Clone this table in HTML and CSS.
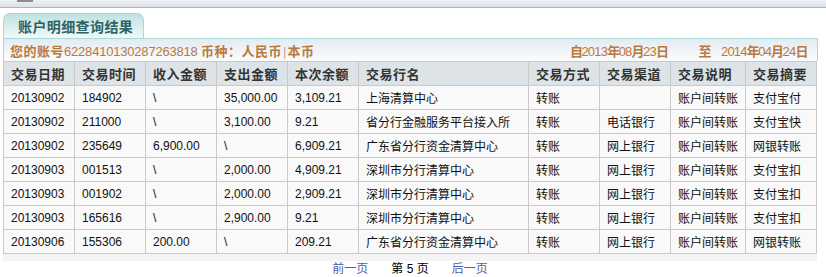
FILE: index.html
```html
<!DOCTYPE html>
<html lang="zh-CN">
<head>
<meta charset="utf-8">
<title>账户明细查询结果</title>
<link rel="stylesheet" href="styles.css">
</head>
<body>
<div class="topbar"><span class="topbar-btn"></span></div>
<div class="panel">
  <div class="tabs"><div class="tab">账户明细查询结果</div></div>
  <div class="infobar">
    <div class="info-left">您的账号<span class="num">6228410130287263818</span> 币种：人民币<span class="sep">|</span>本币</div>
    <div class="info-right">自<span class="d">2013</span>年<span class="d">08</span>月<span class="d">23</span>日<span class="to">至</span><span class="d">2014</span>年<span class="d">04</span>月<span class="d">24</span>日</div>
  </div>
  <table class="grid">
    <colgroup>
      <col class="c71"><col class="c71"><col class="c71"><col class="c71"><col class="c71">
      <col class="c170"><col class="c71"><col class="c71"><col class="c75"><col class="c71">
    </colgroup>
    <thead>
      <tr><th>交易日期</th><th>交易时间</th><th>收入金额</th><th>支出金额</th><th>本次余额</th><th>交易行名</th><th>交易方式</th><th>交易渠道</th><th>交易说明</th><th>交易摘要</th></tr>
    </thead>
    <tbody>
      <tr><td>20130902</td><td>184902</td><td>\</td><td>35,000.00</td><td>3,109.21</td><td>上海清算中心</td><td>转账</td><td></td><td>账户间转账</td><td>支付宝付</td></tr>
      <tr><td>20130902</td><td>211000</td><td>\</td><td>3,100.00</td><td>9.21</td><td>省分行金融服务平台接入所</td><td>转账</td><td>电话银行</td><td>账户间转账</td><td>支付宝快</td></tr>
      <tr><td>20130902</td><td>235649</td><td>6,900.00</td><td>\</td><td>6,909.21</td><td>广东省分行资金清算中心</td><td>转账</td><td>网上银行</td><td>账户间转账</td><td>网银转账</td></tr>
      <tr><td>20130903</td><td>001513</td><td>\</td><td>2,000.00</td><td>4,909.21</td><td>深圳市分行清算中心</td><td>转账</td><td>网上银行</td><td>账户间转账</td><td>支付宝扣</td></tr>
      <tr><td>20130903</td><td>001902</td><td>\</td><td>2,000.00</td><td>2,909.21</td><td>深圳市分行清算中心</td><td>转账</td><td>网上银行</td><td>账户间转账</td><td>支付宝扣</td></tr>
      <tr><td>20130903</td><td>165616</td><td>\</td><td>2,900.00</td><td>9.21</td><td>深圳市分行清算中心</td><td>转账</td><td>网上银行</td><td>账户间转账</td><td>支付宝扣</td></tr>
      <tr><td>20130906</td><td>155306</td><td>200.00</td><td>\</td><td>209.21</td><td>广东省分行资金清算中心</td><td>转账</td><td>网上银行</td><td>账户间转账</td><td>网银转账</td></tr>
    </tbody>
  </table>
  <div class="strip"></div>
  <div class="pager"><a class="plink" href="#">前一页</a><span class="pcur">第 5 页</span><a class="plink" href="#">后一页</a></div>
</div>
</body>
</html>
```

FILE: styles.css
```css
* { box-sizing: border-box; }
html, body { margin: 0; padding: 0; background: #fff; }
body {
  font-family: "Liberation Sans", Arial, "Noto Sans CJK SC", sans-serif;
  font-size: 12px;
  color: #000;
  width: 826px;
  height: 277px;
  overflow: hidden;
}
.topbar {
  height: 8px;
  background: linear-gradient(#eef1f4, #dde2e6);
  border-bottom: 1px solid #b3b3b3;
  display: flex;
  align-items: flex-start;
}
.topbar-btn {
  display: block;
  margin-left: 17px;
  width: 16px;
  height: 2px;
  background: #8d8d8d;
}
.panel {
  margin-left: 3px;
  width: 815px;
  margin-top: 5px;
}
.tabs {
  height: 26px;
  border-bottom: 1px solid #a9dbdb;
  display: flex;
}
.tab {
  width: 141px;
  height: 25px;
  border: 1px solid #a9d6d6;
  border-bottom: none;
  border-radius: 7px 7px 0 0;
  background: linear-gradient(#bfe1e1, #f2f9f9);
  color: #2e6262;
  font-family: "Noto Sans CJK SC", sans-serif;
  font-weight: bold;
  font-size: 14px;
  letter-spacing: 0.4px;
  line-height: 24px;
  padding-left: 14px;
}
.infobar {
  height: 22px;
  border-left: 1px solid #a9dbdb;
  border-right: 1px solid #a9dbdb;
  background: linear-gradient(#e3ebf2, #fbfcfd);
  display: flex;
  justify-content: space-between;
  align-items: center;
  padding: 0 10px 0 6px;
  color: #b9793c;
  font-family: "Noto Sans CJK SC", sans-serif;
  font-weight: bold;
  font-size: 13px;
  white-space: nowrap;
}
.info-left { letter-spacing: 0.5px; }
.info-left .num {
  font-family: "Liberation Sans", Arial, sans-serif;
  font-weight: normal;
  letter-spacing: -0.2px;
}
.sep {
  color: #c9a0a0;
  font-weight: normal;
  font-family: "Liberation Sans", sans-serif;
  margin: 0 1px;
  letter-spacing: 0;
}
.info-right { letter-spacing: -1.5px; }
.info-right .d {
  font-family: "Liberation Sans", Arial, sans-serif;
  font-weight: normal;
  letter-spacing: -0.8px;
}
.to { margin: 0 11px 0 31px; }
.grid {
  width: 814px;
  border-collapse: collapse;
  table-layout: fixed;
  border: 1px solid #c9c9c9;
}
.c71 { width: 71px; }
.c75 { width: 75px; }
.c170 { width: 170px; }
.grid th, .grid td {
  border: 1px solid #c9c9c9;
  height: 24px;
  padding: 0 0 0 7px;
  text-align: left;
  white-space: nowrap;
  overflow: hidden;
}
.grid th {
  background: #dde3e6;
  color: #333;
  font-family: "Noto Sans CJK SC", sans-serif;
  font-weight: bold;
  font-size: 13px;
  letter-spacing: 0.5px;
}
.grid td {
  background: #f9f9f9;
  font-size: 12px;
  color: #111;
}
.strip {
  width: 814px;
  height: 7px;
  background: #f4f4f4;
}
.pager {
  width: 814px;
  height: 16px;
  display: flex;
  justify-content: center;
  gap: 23px;
  line-height: 16px;
  font-size: 12px;
}
.plink { color: #4d5fa8; text-decoration: none; }
.pcur { color: #000; }
```
